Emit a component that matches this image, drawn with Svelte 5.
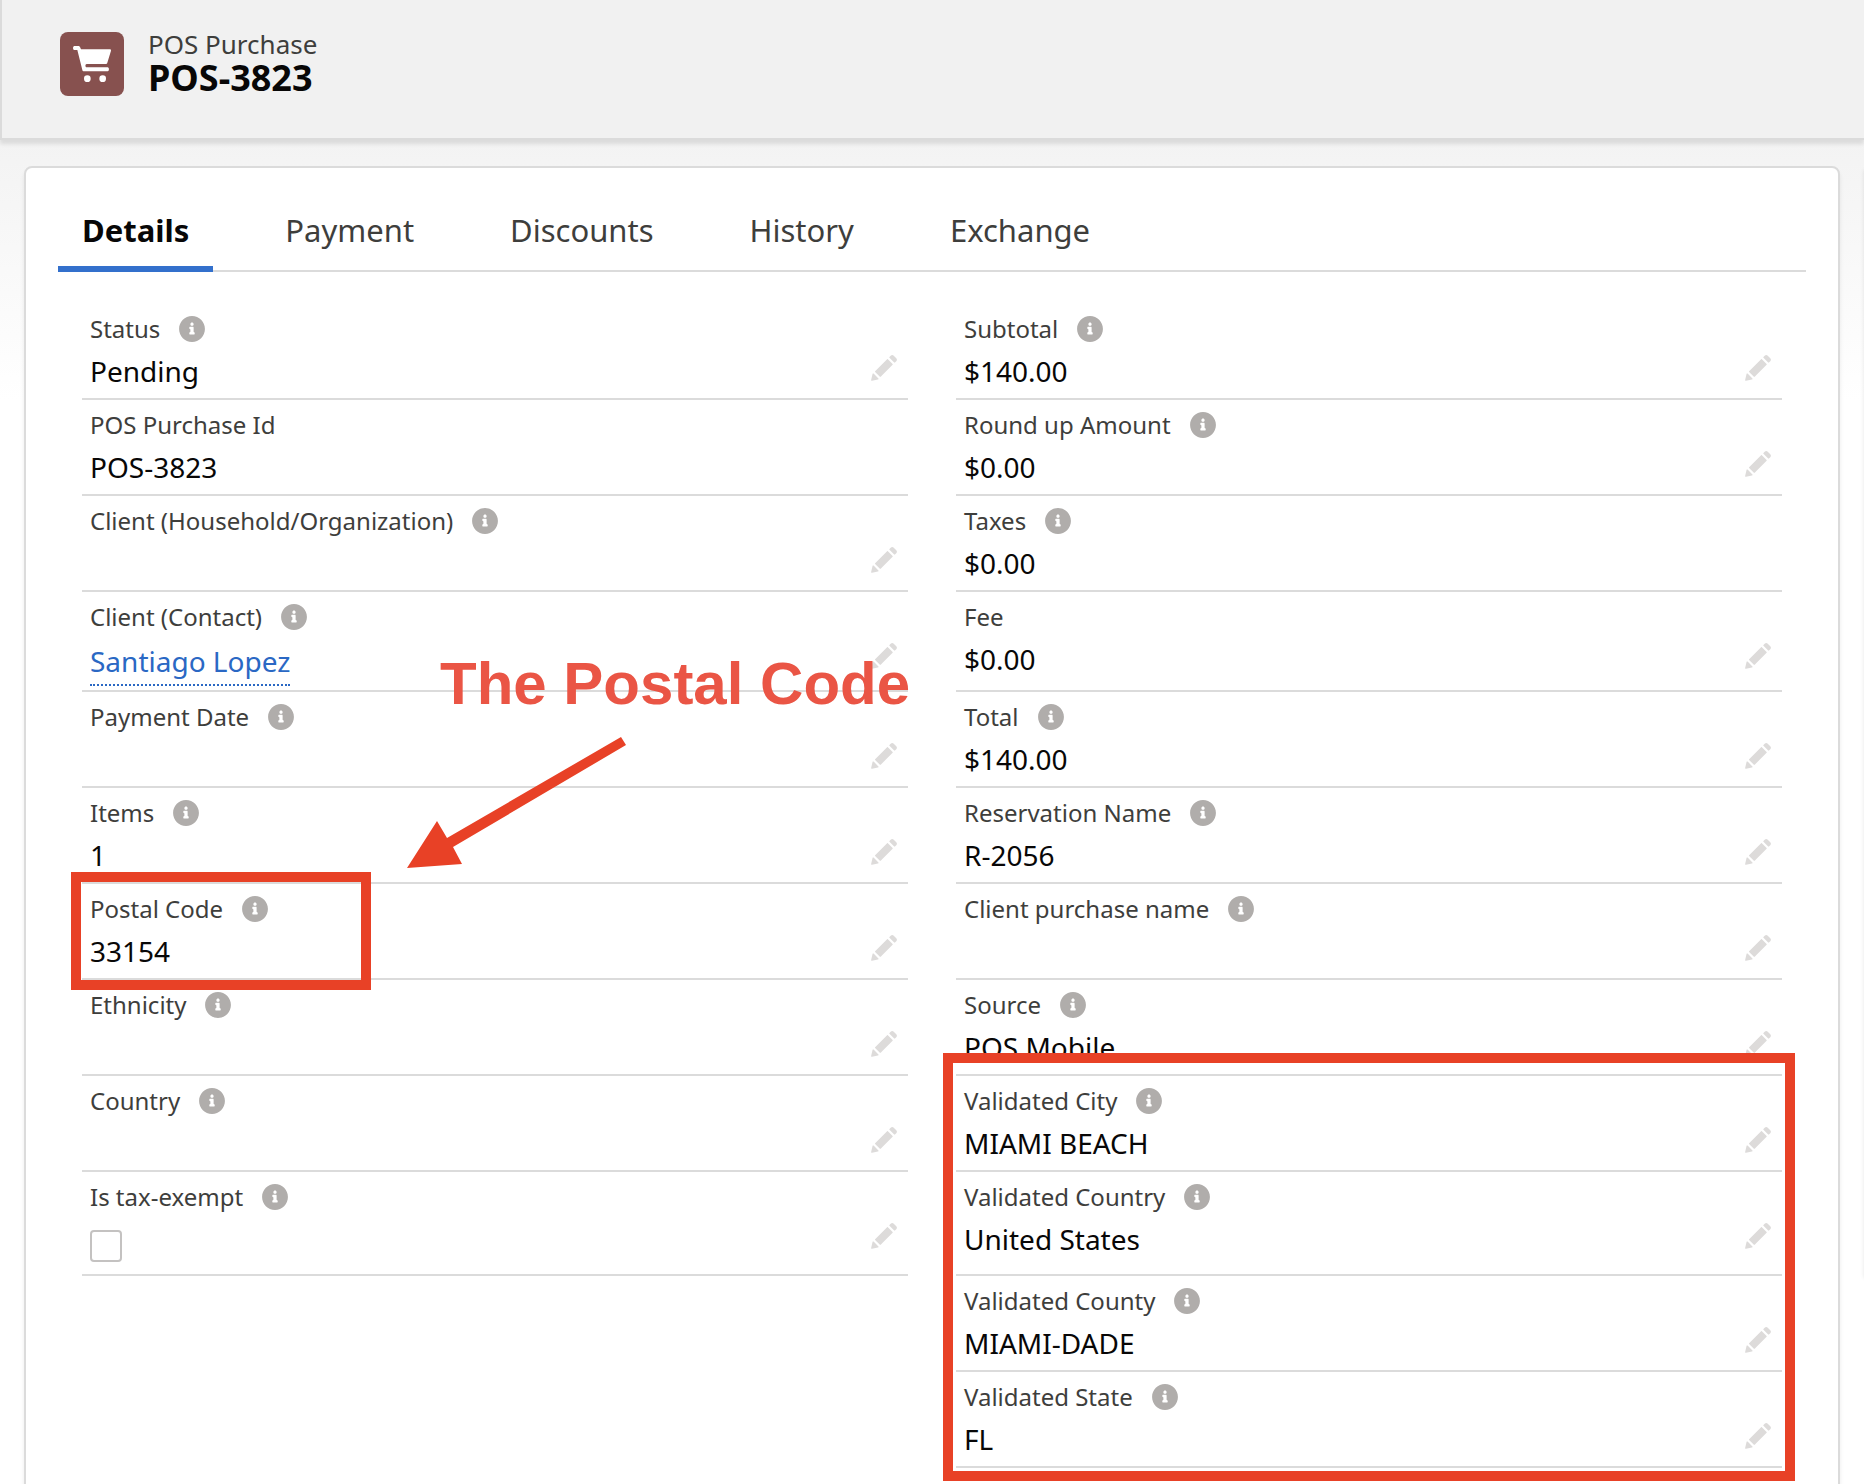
<script>
  const tabs = ['Details', 'Payment', 'Discounts', 'History', 'Exchange'];
  let active = $state('Details');
  let taxExempt = $state(false);

  const left = [
    { label: 'Status', info: true, value: 'Pending', edit: true },
    { label: 'POS Purchase Id', value: 'POS-3823' },
    { label: 'Client (Household/Organization)', info: true, edit: true },
    { label: 'Client (Contact)', info: true, value: 'Santiago Lopez', kind: 'link', edit: true },
    { label: 'Payment Date', info: true, edit: true },
    { label: 'Items', info: true, value: '1', edit: true },
    { label: 'Postal Code', info: true, value: '33154', edit: true },
    { label: 'Ethnicity', info: true, edit: true },
    { label: 'Country', info: true, edit: true },
    { label: 'Is tax-exempt', info: true, kind: 'checkbox', edit: true }
  ];

  const right = [
    { label: 'Subtotal', info: true, value: '$140.00', edit: true },
    { label: 'Round up Amount', info: true, value: '$0.00', edit: true },
    { label: 'Taxes', info: true, value: '$0.00' },
    { label: 'Fee', value: '$0.00', edit: true },
    { label: 'Total', info: true, value: '$140.00', edit: true },
    { label: 'Reservation Name', info: true, value: 'R-2056', edit: true },
    { label: 'Client purchase name', info: true, edit: true },
    { label: 'Source', info: true, value: 'POS Mobile', edit: true },
    { label: 'Validated City', info: true, value: 'MIAMI BEACH', edit: true },
    { label: 'Validated Country', info: true, value: 'United States', edit: true },
    { label: 'Validated County', info: true, value: 'MIAMI-DADE', edit: true },
    { label: 'Validated State', info: true, value: 'FL', edit: true }
  ];

  const cells = [
    ...left.map((f, i) => ({ ...f, row: i + 1, col: 1 })),
    ...right.map((f, i) => ({ ...f, row: i + 1, col: 2 }))
  ];
</script>

<div class="page">
  <header class="record-header">
    <span class="object-icon">
      <svg viewBox="0 0 192 192" aria-hidden="true">
        <path d="M43 42h11c4 0 6 2 7 5l2 5h86c3 0 4 1 4 4l-11 36c-1 3-3 4-5 4H80c-5 0-5 10 0 10h63c5 0 5 12 0 12H72c-3 0-4-1-5-4L52 54h-9c-5 0-5-12 0-12z" />
        <circle cx="82" cy="140" r="10" />
        <circle cx="128" cy="140" r="10" />
      </svg>
    </span>
    <div class="titles">
      <div class="object-name">POS Purchase</div>
      <h1>POS-3823</h1>
    </div>
  </header>

  <main>
    <section class="card">
      <div class="tabs" role="tablist">
        {#each tabs as tab}
          <button type="button" role="tab" class="tab" class:active={active === tab} aria-selected={active === tab} onclick={() => (active = tab)}>{tab}</button>
        {/each}
      </div>

      <div class="fields">
        {#each cells as f}
          <div class="field" class:second={f.col === 2} style="grid-row: {f.row}">
            <div class="label-row">
              {#if f.kind === 'checkbox'}
                <label class="label" for="tax-exempt">{f.label}</label>
              {:else}
                <span class="label">{f.label}</span>
              {/if}
              {#if f.info}
                <button type="button" class="info" aria-label="Help: {f.label}">
                  <svg viewBox="0 0 52 52" aria-hidden="true"><path d="M26 2C12.7 2 2 12.7 2 26s10.7 24 24 24 24-10.7 24-24S39.3 2 26 2zm0 12.1c1.7 0 3 1.3 3 3s-1.3 3-3 3-3-1.3-3-3 1.3-3 3-3zm5 21c0 .5-.4.9-1 .9h-8c-.5 0-1-.3-1-.9v-2c0-.5.4-1.1 1-1.1.5 0 1-.3 1-.9v-4c0-.5-.4-1.1-1-1.1-.5 0-1-.3-1-.9v-2c0-.5.4-1.1 1-1.1h6c.5 0 1 .5 1 1.1v8c0 .5.4.9 1 .9.5 0 1 .5 1 1.1v2z" /></svg>
                </button>
              {/if}
            </div>
            <div class="value-row">
              {#if f.kind === 'link'}
                <a href="#contact">{f.value}</a>
              {:else if f.kind === 'checkbox'}
                <input id="tax-exempt" type="checkbox" bind:checked={taxExempt} />
              {:else}
                <span class="value">{f.value ?? ''}</span>
              {/if}
              {#if f.edit}
                <button type="button" class="edit" aria-label="Edit {f.label}">
                  <svg viewBox="0 0 52 52" aria-hidden="true"><path d="M9.5 33.4l8.9 8.9c.4.4 1 .4 1.4 0L42 20c.4-.4.4-1 0-1.4l-8.8-8.8c-.4-.4-1-.4-1.4 0L9.5 32.1c-.4.4-.4 1 0 1.3zM36.1 5.7c-.4.4-.4 1 0 1.4l8.8 8.8c.4.4 1 .4 1.4 0l2.5-2.5c1.6-1.5 1.6-3.9 0-5.5l-4.7-4.7c-1.6-1.6-4.1-1.6-5.7 0l-2.3 2.5zM2.1 48.2c-.2 1 .7 1.9 1.7 1.7l10.9-2.6c.4-.1.7-.3.9-.5l.2-.2c.2-.2.3-.9-.1-1.3l-9-9c-.4-.4-1.1-.3-1.3-.1l-.2.2c-.3.3-.4.6-.5.9L2.1 48.2z" /></svg>
                </button>
              {/if}
            </div>
          </div>
        {/each}

        <div class="mark postal"></div>
        <div class="mark validated"></div>
        <div class="callout">The Postal Code</div>
        <svg class="arrow" viewBox="0 0 220 132" aria-hidden="true">
          <path d="M0 131L30 84l10 17L214 0l5 8L46 110l9 17z" />
        </svg>
      </div>
    </section>
    <aside class="side-card"></aside>
  </main>
</div>

<style>
  :global(body) {
    margin: 0;
    overflow-x: hidden;
    background: #fff;
  }
  .page {
    font-family: 'Noto Sans', 'Open Sans', sans-serif;
    color: #080707;
    height: 100vh;
    overflow: hidden;
  }
  button {
    font: inherit;
    background: none;
    border: 0;
    padding: 0;
    cursor: pointer;
  }
  .record-header {
    position: relative;
    display: flex;
    align-items: center;
    gap: 24px;
    padding: 28px 58px 38px;
    background: #f1f1f1;
    border-left: 2px solid #dbdbdb;
    border-bottom: 2px solid #dbdbdb;
    box-shadow: 0 4px 4px rgba(0, 0, 0, 0.1);
  }
  .object-icon {
    width: 64px;
    height: 64px;
    border-radius: 8px;
    background: #87514f;
  }
  .object-icon svg {
    display: block;
    fill: #fff;
  }
  .titles {
    height: 72px;
  }
  .object-name {
    font-size: 26px;
    line-height: 32px;
    color: #3e3e3c;
  }
  h1 {
    margin: 0;
    font-size: 36px;
    line-height: 36px;
    font-weight: 700;
  }
  main {
    display: flex;
    align-items: flex-start;
    gap: 24px;
    padding: 26px 0 24px 24px;
    background: linear-gradient(#f3f3f3, #fff 260px);
  }
  .card {
    flex: 1;
    min-width: 0;
    padding: 24px 32px 48px;
    background: #fff;
    border: 2px solid #dbdbdb;
    border-radius: 8px;
    box-shadow: 0 4px 4px rgba(0, 0, 0, 0.08);
  }
  .side-card {
    width: 8px;
    height: 1108px;
    margin-right: -8px;
    background: #fff;
    box-shadow: 0 4px 4px rgba(0, 0, 0, 0.1);
  }
  .tabs {
    display: flex;
    gap: 48px;
    border-bottom: 2px solid #dbdbdb;
  }
  .tab {
    padding: 0 24px;
    height: 80px;
    margin-bottom: -2px;
    border-bottom: 6px solid transparent;
    font-size: 31px;
    line-height: 76px;
    color: #3e3e3c;
  }
  .tab.active {
    font-weight: 700;
    color: #080707;
    border-bottom-color: #3370cc;
  }
  .fields {
    position: relative;
    display: grid;
    grid-template-columns: 1fr 1fr;
    column-gap: 48px;
    margin: 32px 24px 0;
  }
  .field {
    grid-column: 1;
    display: flex;
    flex-direction: column;
    gap: 4px;
    padding: 8px 8px 6px;
    border-bottom: 2px solid #dbdbdb;
  }
  .field.second {
    grid-column: 2;
  }
  .label-row {
    display: flex;
    align-items: center;
    gap: 18px;
    height: 34px;
  }
  .label {
    font-size: 24px;
    line-height: 34px;
    color: #3e3e3c;
    white-space: nowrap;
  }
  .info svg {
    display: block;
    width: 28px;
    height: 28px;
    fill: #b0adab;
  }
  .value-row {
    display: flex;
    justify-content: space-between;
    align-items: flex-start;
    min-height: 42px;
  }
  .value {
    font-size: 28px;
    line-height: 42px;
  }
  a {
    margin-bottom: -2px;
    font-size: 28px;
    line-height: 46px;
    color: #2a68c4;
    text-decoration: none;
    border-bottom: 2px dotted #2a68c4;
  }
  .edit {
    margin: 4px 2px 0 0;
  }
  .edit svg {
    display: block;
    width: 28px;
    height: 28px;
    fill: #dddbda;
  }
  input {
    appearance: none;
    box-sizing: border-box;
    width: 32px;
    height: 32px;
    margin: 12px 0 6px;
    background: #fff;
    border: 2px solid #c4c2c1;
    border-radius: 4px;
  }
  .mark {
    z-index: 1;
    border: 10px solid #e84126;
    pointer-events: none;
  }
  .postal {
    grid-area: 7 / 1;
    box-sizing: border-box;
    width: 300px;
    margin: -12px 0 -10px -11px;
  }
  .validated {
    grid-area: 9 / 2 / 13 / 3;
    margin: -23px -13px -13px;
  }
  .callout {
    position: absolute;
    left: 358px;
    top: 346px;
    font-family: 'Liberation Sans', Arial, sans-serif;
    font-size: 60px;
    line-height: 68px;
    font-weight: 700;
    color: #ea5545;
    white-space: nowrap;
    pointer-events: none;
  }
  .arrow {
    position: absolute;
    left: 325px;
    top: 433px;
    width: 220px;
    height: 132px;
    fill: #e84126;
    pointer-events: none;
  }
</style>
